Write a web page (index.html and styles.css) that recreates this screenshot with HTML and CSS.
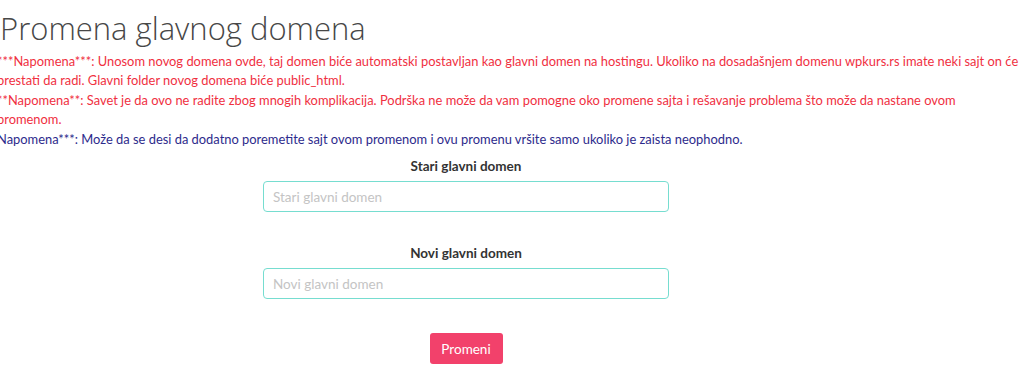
FILE: index.html
```html
<!DOCTYPE html>
<html lang="sr">
<head>
<meta charset="utf-8">
<title>Promena glavnog domena</title>
<link rel="stylesheet" href="styles.css">
</head>
<body>
<div class="page">
  <h1 class="title">Promena glavnog domena</h1>
  <p class="note note-red">***Napomena***: Unosom novog domena ovde, taj domen biće automatski postavljan kao glavni domen na hostingu. Ukoliko na dosadašnjem domenu wpkurs.rs imate neki sajt on će prestati da radi. Glavni folder novog domena biće public_html.</p>
  <p class="note note-red">**Napomena**: Savet je da ovo ne radite zbog mnogih komplikacija. Podrška ne može da vam pomogne oko promene sajta i rešavanje problema što može da nastane ovom promenom.</p>
  <p class="note note-blue">Napomena***: Može da se desi da dodatno poremetite sajt ovom promenom i ovu promenu vršite samo ukoliko je zaista neophodno.</p>
  <form class="form">
    <div class="field">
      <label class="label" for="old">Stari glavni domen</label>
      <input class="input" id="old" type="text" placeholder="Stari glavni domen">
    </div>
    <div class="field">
      <label class="label" for="new">Novi glavni domen</label>
      <input class="input" id="new" type="text" placeholder="Novi glavni domen">
    </div>
    <div class="actions">
      <button class="btn" type="button">Promeni</button>
    </div>
  </form>
</div>
</body>
</html>
```
FILE: styles.css
```css
* { box-sizing: border-box; }
html, body { margin: 0; padding: 0; background: #fff; }
body { font-family: "Lato", "Open Sans", sans-serif; overflow: hidden; }
.page { margin-left: -3px; width: 1022px; }
.title {
  margin: 8px 0 4px 3px;
  font-family: "Open Sans", sans-serif;
  font-size: 31px;
  font-weight: 300;
  line-height: 40px;
  color: #474747;
}
.note {
  margin: 0 0 1px 0;
  font-size: 12.9px;
  line-height: 19px;
}
.note-red { color: #f0303f; }
.note-blue { color: #2d2b8c; }
.form { width: 406px; margin: 8px 0 0 266px; }
.field { display: flex; flex-direction: column; align-items: center; margin-bottom: 32px; }
.label { font-weight: 700; font-size: 13.5px; line-height: 18px; color: #333; margin-bottom: 6px; }
.input {
  width: 100%; height: 31px;
  border: 1.5px solid #76ddd0; border-radius: 4px;
  padding: 0 9px;
  font-family: inherit; font-size: 13.5px; color: #333;
  outline: none;
}
.input::placeholder { color: #c4c4c4; }
.actions { display: flex; justify-content: center; padding-top: 2px; }
.btn {
  background: #f2416b; color: #fff; border: 0; border-radius: 3px;
  width: 73px; height: 31px;
  font-family: inherit; font-size: 13.5px;
}
```
